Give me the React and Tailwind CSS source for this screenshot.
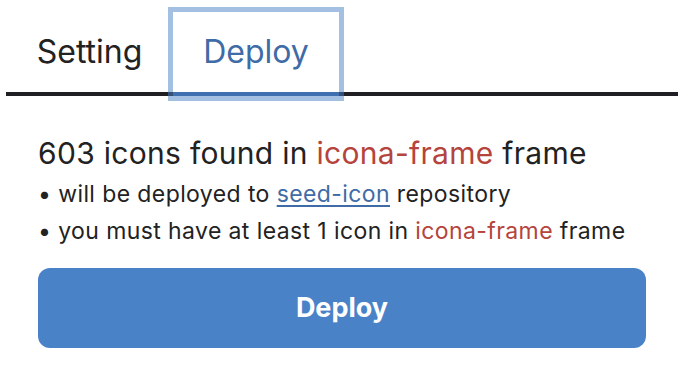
export default function App() {
  return (
    <div className="pl-[6px] pr-[10px] pt-[12px] font-['Inter',sans-serif] bg-white">
      <div className="flex border-b-4 border-[#1f1f24]">
        <button className="flex h-[80px] w-[167px] items-center justify-center text-[32px] text-[#222222]">
          Setting
        </button>
        <button className="-mb-1 flex h-[84px] w-[166px] items-center justify-center border-b-4 border-[#3e6fb0] text-[32px] text-[#3f6ba6] outline-[5.5px] outline-[rgba(72,130,200,0.5)]">
          Deploy
        </button>
      </div>
      <div className="px-[32px]">
        <div className="mt-[39px] text-[30px] leading-[36px] tracking-[0.3px] text-[#222222]">
          603 icons found in <span className="text-[#b4443c]">icona-frame</span> frame
        </div>
        <ul className="mt-[5px] text-[23px] leading-[36.5px] tracking-[0.4px] text-[#222222]">
          <li>
            • will be deployed to{" "}
            <a className="text-[#3f6ba6] underline underline-offset-[3px]" href="#">
              seed-icon
            </a>{" "}
            repository
          </li>
          <li>
            • you must have at least 1 icon in <span className="text-[#b4443c]">icona-frame</span> frame
          </li>
        </ul>
        <button className="mt-[19px] flex h-[80px] w-full items-center justify-center rounded-[12px] bg-[#4a82c8] text-[27px] font-bold text-white">
          Deploy
        </button>
      </div>
    </div>
  );
}
